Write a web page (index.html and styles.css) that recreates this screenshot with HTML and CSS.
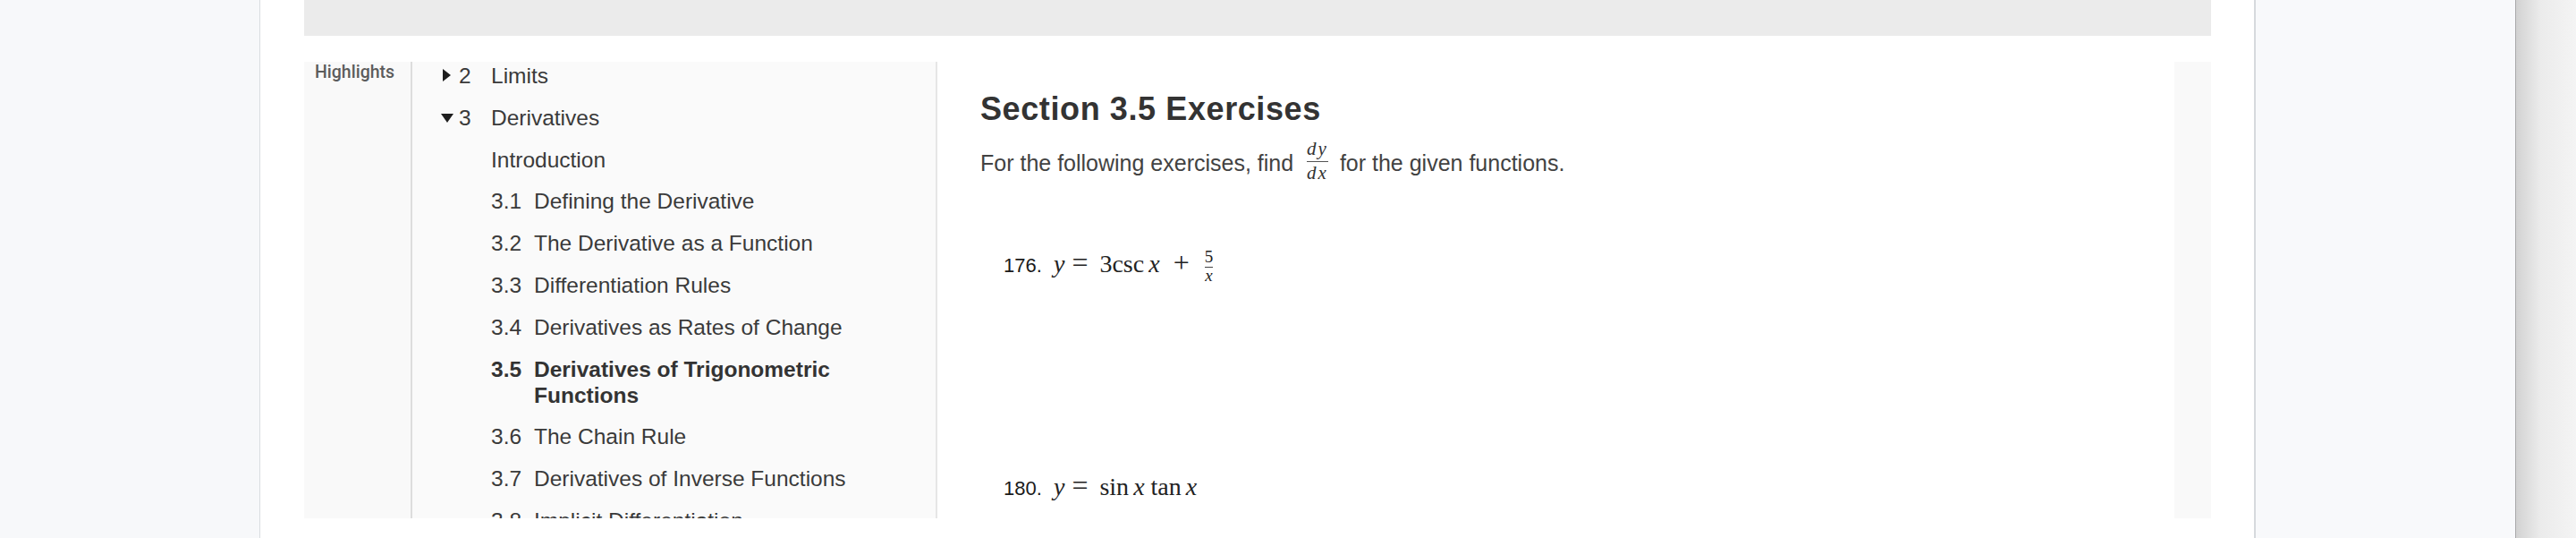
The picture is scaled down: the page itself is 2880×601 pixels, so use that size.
FILE: index.html
```html
<!DOCTYPE html>
<html lang="en">
<head>
<meta charset="utf-8">
<title>Section 3.5 Exercises</title>
<link rel="stylesheet" href="styles.css">
</head>
<body>
<div class="side-left"></div>
<div class="page">
  <div class="topbar"></div>
  <div class="content">
    <aside class="highlights">Highlights</aside>
    <nav class="toc">
      <ul class="toc-list">
        <li class="chapter"><span class="tri tri-right"></span><span class="cnum">2</span><span class="title">Limits</span></li>
        <li class="chapter"><span class="tri tri-down"></span><span class="cnum">3</span><span class="title">Derivatives</span></li>
        <li class="section"><span class="title">Introduction</span></li>
        <li class="section"><span class="snum">3.1</span><span class="title">Defining the Derivative</span></li>
        <li class="section"><span class="snum">3.2</span><span class="title">The Derivative as a Function</span></li>
        <li class="section"><span class="snum">3.3</span><span class="title">Differentiation Rules</span></li>
        <li class="section"><span class="snum">3.4</span><span class="title">Derivatives as Rates of Change</span></li>
        <li class="section current"><span class="snum">3.5</span><span class="title">Derivatives of Trigonometric Functions</span></li>
        <li class="section"><span class="snum">3.6</span><span class="title">The Chain Rule</span></li>
        <li class="section"><span class="snum">3.7</span><span class="title">Derivatives of Inverse Functions</span></li>
        <li class="section"><span class="snum">3.8</span><span class="title">Implicit Differentiation</span></li>
      </ul>
    </nav>
    <main class="main">
      <h1 class="heading">Section 3.5 Exercises</h1>
      <p class="intro">For the following exercises, find <span class="frac frac-dy"><span class="num">dy</span><span class="den">dx</span></span> for the given functions.</p>
      <div class="exercise ex-176"><span class="exnum">176.</span> <span class="math"><i class="mi">y</i><span class="rel">=</span><span class="mn">3</span><span class="fn">csc</span><i class="mi arg">x</i><span class="bin">+</span><span class="frac frac-small"><span class="num">5</span><span class="den"><i>x</i></span></span></span></div>
      <div class="exercise ex-180"><span class="exnum">180.</span> <span class="math"><i class="mi">y</i><span class="rel">=</span><span class="fn">sin</span><i class="mi arg">x</i><span class="fn fn-tan">tan</span><i class="mi arg">x</i></span></div>
    </main>
    <div class="rstrip"></div>
  </div>
</div>
<div class="side-right"></div>
<div class="shadow"></div>
</body>
</html>
```

FILE: styles.css
```css
html, body {
  margin: 0;
  padding: 0;
}
body {
  display: flex;
  height: 601px;
  overflow: hidden;
  background: #ffffff;
  font-family: "Liberation Sans", Arial, sans-serif;
}
.side-left {
  width: 290px;
  flex: none;
  background: #f7f8fa;
  border-right: 1px solid #dadde1;
}
.page {
  flex: 1;
  background: #ffffff;
  padding: 0 48px 0 49px;
  display: flex;
  flex-direction: column;
}
.topbar {
  height: 40px;
  background: #ebebeb;
  flex: none;
}
.content {
  margin-top: 29px;
  height: 510px;
  display: flex;
  overflow: hidden;
}
.highlights {
  width: 107px;
  flex: none;
  background: #f9f9f9;
  border-right: 2px solid #dddddd;
  padding: 1px 0 0 12px;
  font-family: Roboto, "Liberation Sans", sans-serif;
  font-size: 19.5px;
  line-height: 22px;
  font-weight: 500;
  color: #5c5c5c;
}
.toc {
  width: 585px;
  flex: none;
  background: #fafafa;
  border-right: 2px solid #e6e6e6;
  color: #3a3a3a;
}
.toc-list {
  list-style: none;
  margin: 0;
  padding: 1px 0 0 0;
  display: flex;
  flex-direction: column;
  gap: 17.8px;
  font-size: 24.5px;
  line-height: 29px;
}
.toc-list li {
  display: flex;
  align-items: flex-start;
}
.chapter {
  padding-left: 34px;
}
.tri {
  width: 18px;
  height: 29px;
  flex: none;
  position: relative;
}
.tri::before {
  content: "";
  position: absolute;
  width: 0;
  height: 0;
}
.tri-right::before {
  left: 0;
  top: 7px;
  border-left: 9px solid #1e1e1e;
  border-top: 7.5px solid transparent;
  border-bottom: 7.5px solid transparent;
}
.tri-down::before {
  left: -2px;
  top: 10px;
  border-top: 10px solid #1e1e1e;
  border-left: 7.5px solid transparent;
  border-right: 7.5px solid transparent;
}
.cnum {
  width: 36px;
  flex: none;
}
.section {
  padding-left: 88px;
}
.snum {
  width: 48px;
  flex: none;
}
.current {
  font-weight: 700;
  color: #333333;
}
.main {
  flex: 1;
  padding: 32px 0 0 48px;
  color: #424242;
}
.heading {
  margin: 0;
  font-size: 36px;
  line-height: 42px;
  letter-spacing: 0.6px;
  font-weight: 700;
  color: #333333;
}
.intro {
  margin: 13.5px 0 0 0;
  font-size: 25px;
  line-height: 30px;
}
.frac {
  display: inline-block;
  text-align: center;
  font-family: "Liberation Serif", "Times New Roman", serif;
  font-style: italic;
}
.frac .num, .frac .den {
  display: block;
}
.frac-dy {
  font-size: 21px;
  line-height: 18px;
  letter-spacing: 2px;
  padding: 0 1px 0 2px;
  margin: 0 5px 0 6px;
  vertical-align: -9.5px;
  color: #333333;
}
.frac-dy .num {
  padding-bottom: 5px;
  border-bottom: 1px solid #555555;
}
.frac-dy .den {
  padding-top: 3px;
}
.exercise {
  margin-left: 26px;
  font-size: 22px;
  line-height: 30px;
  color: #1a1a1a;
}
.ex-176 {
  margin-top: 76px;
}
.ex-180 {
  margin-top: 211px;
}
.math {
  font-family: "Liberation Serif", "Times New Roman", serif;
  font-size: 28px;
  color: #222222;
  margin-left: 7px;
}
.mi {
  font-style: italic;
  padding-right: 3px;
}
.rel {
  font-size: 32px;
  margin: 0 13px 0 5px;
}
.fn {
  margin-left: 0;
}
.fn-tan {
  margin-left: 4px;
}
.arg {
  margin-left: 5px;
}
.bin {
  font-size: 32px;
  margin: 0 15px 0 12px;
}
.frac-small {
  font-style: normal;
  font-size: 19px;
  line-height: 17px;
  padding: 0 2px;
  vertical-align: -10.7px;
}
.frac-small .num {
  padding-bottom: 3px;
  border-bottom: 1px solid #444444;
}
.frac-small .den {
  padding-top: 0;
}
.rstrip {
  width: 41px;
  flex: none;
  margin-left: auto;
  background: #f9f9f9;
}
.side-right {
  width: 290px;
  flex: none;
  background: #f8f9fb;
  border-left: 2px solid #d6d9dd;
}
.shadow {
  width: 67px;
  flex: none;
  border-left: 1px solid #a9a9a9;
  background: linear-gradient(to right, #d2d2d2, #ebebeb 40%, #f4f4f4);
}
```
